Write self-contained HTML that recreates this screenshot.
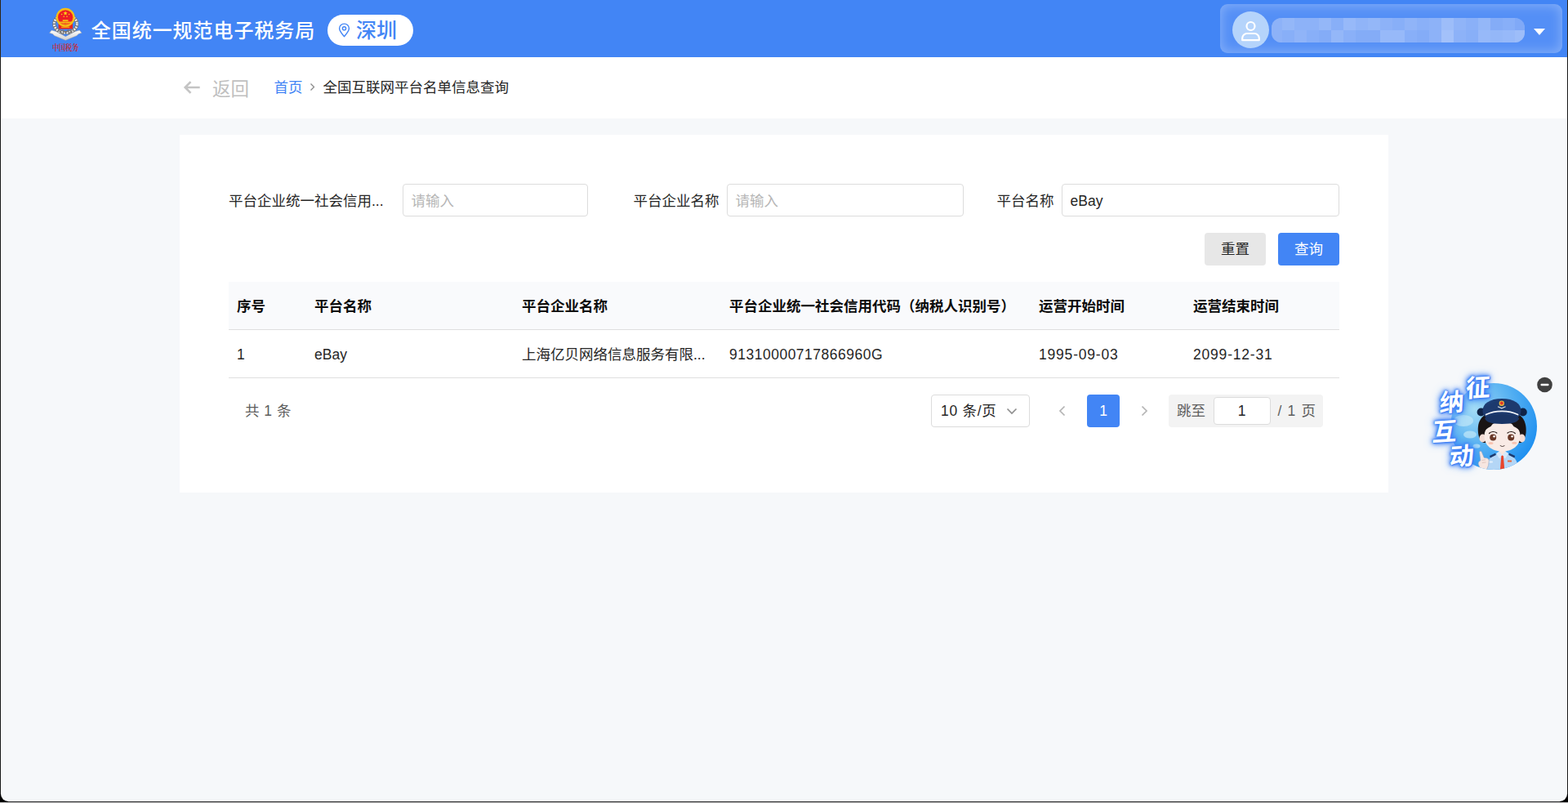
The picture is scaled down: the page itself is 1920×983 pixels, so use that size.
<!DOCTYPE html>
<html lang="zh-CN">
<head>
<meta charset="utf-8">
<title>全国互联网平台名单信息查询</title>
<style>
*{box-sizing:border-box;margin:0;padding:0}
html,body{width:1920px;height:983px;overflow:hidden;background:#000}
body{font-family:"Liberation Sans","Noto Sans CJK SC",sans-serif;font-size:17.5px;color:#222;position:relative}
.abs{position:absolute}
#win{position:absolute;left:1px;top:0;width:1918px;height:981px;background:#f6f8fa;border-radius:0 0 9px 9px;overflow:hidden}
#bottomline{position:absolute;left:0;top:982px;width:1920px;height:1px;background:#c0c0c0}
.edge{position:absolute;width:1px}
#eb{position:absolute;left:10px;top:981px;width:1900px;height:1px;background:#2d2d2d}
#page{position:absolute;left:-1px;top:0;width:1920px;height:983px}
#hdr{position:absolute;left:0;top:0;width:1920px;height:70px;background:#4285f5}
#sub{position:absolute;left:0;top:70px;width:1920px;height:75px;background:#fff}
#card{position:absolute;left:220px;top:165px;width:1480px;height:438px;background:#fff}
.t{position:absolute;white-space:nowrap;line-height:1}

#title{left:111.800px;top:25.300px;font-size:24px;line-height:26px;color:#fff;font-weight:500;letter-spacing:.95px}
#pill{position:absolute;left:401px;top:18px;width:105px;height:38px;border-radius:19px;background:#fff}
#city{left:35px;top:6px;font-size:25px;line-height:26px;color:#4285f5;font-weight:500}
#user{position:absolute;left:1494px;top:5px;width:419px;height:60px;border-radius:9px;background:#548ff6;box-shadow:inset 0 0 14px 2px rgba(255,255,255,.28)}
#avatar{position:absolute;left:15px;top:9px;width:45px;height:45px;border-radius:50%;background:#b5d4fb}
#mosaic{position:absolute;left:63px;top:17px;width:310px;height:30px;border-radius:12px;overflow:hidden;background:#7aa7f7}
#mosaic i{position:absolute;width:15px;height:15px}
#caret{position:absolute;left:384px;top:30px;width:0;height:0;border-left:7.5px solid transparent;border-right:7.5px solid transparent;border-top:8px solid #fff}
#logotxt{left:64px;top:49.500px;font-size:8.300px;line-height:10px;color:#d3211c;font-weight:600;font-family:"Noto Serif CJK SC","Liberation Serif",serif;letter-spacing:-.3px;transform:scaleY(1.3);transform-origin:0 0}

#back{left:260px;top:97.500px;font-size:22.5px;line-height:24px;color:#c0c0c0}
#bc1{left:335.500px;top:97px;font-size:17.5px;line-height:20px;color:#4285f5}
#bc2{left:395.500px;top:97px;font-size:17.5px;line-height:20px;color:#262626}
.lbl{position:absolute;top:61px;height:40px;line-height:40px;font-size:17.5px;color:#262626;white-space:nowrap}
.inp{position:absolute;top:60px;height:40px;border:1px solid #dcdcdc;border-radius:4px;background:#fff;line-height:40px;padding-left:9.500px;font-size:17.5px;color:#262626;white-space:nowrap}
.inp.ph{color:#b6b6b6}
.btn{position:absolute;top:120px;width:75px;height:40px;border-radius:4px;line-height:41px;text-align:center;font-size:17.5px}
#thead{position:absolute;left:60px;top:180px;width:1360px;height:58px;background:#f9fafc}
.line{position:absolute;left:60px;width:1360px;height:1px;background:#dfdfdf}
.th{position:absolute;top:182px;height:57px;line-height:57px;font-size:17.5px;font-weight:700;color:#0c0c0c;white-space:nowrap}
.td{position:absolute;top:240px;height:58px;line-height:58px;font-size:17.5px;color:#262626;white-space:nowrap}
.pg{position:absolute;top:318px;height:40px;line-height:41px;font-size:17.5px;white-space:nowrap}

#wd{position:absolute;left:1740px;top:450px;width:170px;height:140px}
.wt{position:absolute;font-size:30px;line-height:30px;font-weight:700;color:#fff;font-family:"Noto Sans CJK SC","Liberation Sans",sans-serif;text-shadow:0 0 2px #3b7cf5,0 0 3px #3b7cf5,0 0 4px #3b7cf5,0 0 6px #3f84f6,0 0 9px #4a8cf7,0 0 12px rgba(74,140,247,.7),1px 1px 1px #2f6fe0;transform:rotate(-4deg) skewX(-7deg);white-space:nowrap}
</style>
</head>
<body>
<div id="win"><div id="page">
<div id="hdr">
<svg class="abs" style="left:58px;top:8px" width="46" height="44" viewBox="0 0 46 44">
 <defs><linearGradient id="rb" x1="0" y1="0" x2="0" y2="1"><stop offset="0" stop-color="#fff"/><stop offset="1" stop-color="#cfcfcf"/></linearGradient></defs>
 <ellipse cx="22.300" cy="21.200" rx="14" ry="11" fill="none" stroke="#727272" stroke-width="4.200"/>
 <ellipse cx="22.300" cy="21.200" rx="14" ry="11" fill="none" stroke="#ececec" stroke-width="2.800" stroke-dasharray="2 1.300"/>
 <path d="M13.600 19h17.400v7.200c0 .8-.6 1.300-1.300 1.300H14.900c-.7 0-1.300-.5-1.300-1.300z" fill="#e8261d"/>
 <circle cx="22.100" cy="13.300" r="11.500" fill="#f6bd16"/>
 <circle cx="22.100" cy="13.300" r="9.100" fill="#ee1c25"/>
 <path d="M22.100 5.400l.75 1.750 1.900.15-1.450 1.250.45 1.850-1.650-1-1.650 1 .45-1.850-1.450-1.250 1.900-.15z" fill="#f9d616"/>
 <circle cx="17.600" cy="9.500" r=".8" fill="#f9d616"/><circle cx="26.600" cy="9.500" r=".8" fill="#f9d616"/>
 <circle cx="20.200" cy="12.200" r=".8" fill="#f9d616"/><circle cx="24" cy="12.200" r=".8" fill="#f9d616"/>
 <path d="M18.700 16.300h6.800v1.700h-6.800zM14.300 18.600h15.600c-.5 1.500-1.600 2.500-3 3H17.300c-1.400-.5-2.500-1.500-3-3z" fill="#f6bd16"/>
 <path d="M16.500 20.300c2 .9 3.500.9 5.600 0 2.100.9 3.600.9 5.600 0" fill="none" stroke="#ee1c25" stroke-width=".7"/>
 <path d="M17 24.700h10.200v1.100H17z" fill="#f6bd16"/>
 <path d="M2.600 32.300l2.600-3.300 5.300 1.500 11.800 6.200 11.800-6.200 5.300-1.500 2.600 3.300-3.800 1.200-2.300 2.200-13.600 5.600-13.600-5.600-2.300-2.200z" fill="url(#rb)" stroke="#a5a5a5" stroke-width=".5"/>
 <path d="M19.600 34.700l2.700-1.500 2.700 1.500-2.700 1.600z" fill="#4285f5"/>
 <path d="M14 29.500l4 3.300M30.600 29.500l-4 3.300M18.500 28.500l3.800 3.700 3.800-3.700" fill="none" stroke="#777" stroke-width="1.200"/>
</svg>
<div class="t" id="logotxt">中国税务</div>
<div class="t" id="title">全国统一规范电子税务局</div>
<div id="pill">
 <svg class="abs" style="left:13px;top:10px" width="15" height="18" viewBox="0 0 15 18"><path d="M7.500 1.100c3.300 0 5.900 2.500 5.900 5.700 0 3.400-3.300 6.900-5.900 9.800C4.900 13.700 1.600 10.200 1.600 6.800 1.600 3.600 4.200 1.100 7.500 1.100z" fill="none" stroke="#4285f5" stroke-width="1.400"/><circle cx="7.500" cy="6.800" r="2.100" fill="none" stroke="#4285f5" stroke-width="1.400"/></svg>
 <div class="t" id="city">深圳</div>
</div>
<div id="user">
 <div id="avatar"><svg class="abs" style="left:10px;top:10px" width="25" height="27" viewBox="0 0 25 27"><circle cx="12.500" cy="8" r="5" fill="none" stroke="#fff" stroke-width="2.200"/><path d="M2.200 25.200v-2.400c0-3.200 2.600-5.800 5.800-5.800h9c3.200 0 5.800 2.600 5.800 5.800v2.400z" fill="none" stroke="#fff" stroke-width="2.200" stroke-linejoin="round"/></svg></div>
 <div id="mosaic"><i style="left:-2px;top:0px;background:#8db2f8"></i><i style="left:13px;top:0px;background:#94b7f8"></i><i style="left:28px;top:0px;background:#8db2f8"></i><i style="left:43px;top:0px;background:#8db2f8"></i><i style="left:58px;top:0px;background:#94b7f8"></i><i style="left:73px;top:0px;background:#88aff8"></i><i style="left:88px;top:0px;background:#97b9f9"></i><i style="left:103px;top:0px;background:#90b4f8"></i><i style="left:118px;top:0px;background:#94b7f8"></i><i style="left:133px;top:0px;background:#8db2f8"></i><i style="left:148px;top:0px;background:#88aff8"></i><i style="left:163px;top:0px;background:#90b4f8"></i><i style="left:178px;top:0px;background:#8ab0f8"></i><i style="left:193px;top:0px;background:#8db2f8"></i><i style="left:208px;top:0px;background:#9dbdf9"></i><i style="left:223px;top:0px;background:#90b4f8"></i><i style="left:238px;top:0px;background:#8ab0f8"></i><i style="left:253px;top:0px;background:#94b7f8"></i><i style="left:268px;top:0px;background:#84acf7"></i><i style="left:283px;top:0px;background:#88aff8"></i><i style="left:298px;top:0px;background:#80a9f7"></i><i style="left:-2px;top:15px;background:#8db2f8"></i><i style="left:13px;top:15px;background:#88aff8"></i><i style="left:28px;top:15px;background:#90b4f8"></i><i style="left:43px;top:15px;background:#88aff8"></i><i style="left:58px;top:15px;background:#84acf7"></i><i style="left:73px;top:15px;background:#94b7f8"></i><i style="left:88px;top:15px;background:#8ab0f8"></i><i style="left:103px;top:15px;background:#84acf7"></i><i style="left:118px;top:15px;background:#84acf7"></i><i style="left:133px;top:15px;background:#97b9f9"></i><i style="left:148px;top:15px;background:#97b9f9"></i><i style="left:163px;top:15px;background:#88aff8"></i><i style="left:178px;top:15px;background:#84acf7"></i><i style="left:193px;top:15px;background:#8db2f8"></i><i style="left:208px;top:15px;background:#a3c1fa"></i><i style="left:223px;top:15px;background:#8db2f8"></i><i style="left:238px;top:15px;background:#88aff8"></i><i style="left:253px;top:15px;background:#97b9f9"></i><i style="left:268px;top:15px;background:#94b7f8"></i><i style="left:283px;top:15px;background:#97b9f9"></i><i style="left:298px;top:15px;background:#9dbdf9"></i></div>
 <div id="caret"></div>
</div>
</div>
<div id="sub">
<svg class="abs" style="left:224px;top:28px" width="22" height="18" viewBox="0 0 22 18"><path d="M9.500 2.200L2.700 9l6.800 6.800M2.700 9h18" fill="none" stroke="#c4c4c4" stroke-width="2.600"/></svg>
</div>
<div class="t" id="back">返回</div>
<div class="t" id="bc1">首页</div>
<svg class="abs" style="left:378px;top:100px" width="9" height="13" viewBox="0 0 9 13"><path d="M2.500 2.500l4 4-4 4" fill="none" stroke="#8a8a8a" stroke-width="1.300"/></svg>
<div class="t" id="bc2">全国互联网平台名单信息查询</div>
<div id="card">
<div class="lbl" style="left:60px">平台企业统一社会信用...</div>
<div class="inp ph" style="left:273px;width:227px">请输入</div>
<div class="lbl" style="left:555.500px">平台企业名称</div>
<div class="inp ph" style="left:670px;width:290px">请输入</div>
<div class="lbl" style="left:1000.500px">平台名称</div>
<div class="inp" style="left:1080px;width:340px">eBay</div>
<div class="btn" style="left:1255px;background:#e7e7e7;color:#262626">重置</div>
<div class="btn" style="left:1345px;background:#4285f5;color:#fff">查询</div>
<div id="thead"></div>
<div class="line" style="top:238px"></div>
<div class="line" style="top:297px"></div>
<div class="th" style="left:70px">序号</div>
<div class="th" style="left:165px">平台名称</div>
<div class="th" style="left:419px">平台企业名称</div>
<div class="th" style="left:673px">平台企业统一社会信用代码（纳税人识别号）</div>
<div class="th" style="left:1052px">运营开始时间</div>
<div class="th" style="left:1241px">运营结束时间</div>
<div class="td" style="left:70px">1</div>
<div class="td" style="left:165px">eBay</div>
<div class="td" style="left:419px">上海亿贝网络信息服务有限...</div>
<div class="td" style="left:673px;letter-spacing:.5px">91310000717866960G</div>
<div class="td" style="left:1052px;letter-spacing:.8px">1995-09-03</div>
<div class="td" style="left:1241px;letter-spacing:.8px">2099-12-31</div>
<div class="pg" style="left:80px;color:#5e5e5e;word-spacing:1px">共 1 条</div>
<div class="pg" style="left:920px;width:121px;border:1px solid #dcdcdc;border-radius:4px;line-height:39px;padding-left:11px;color:#262626;letter-spacing:.7px">10 条/页
 <svg class="abs" style="left:91px;top:14px" width="14" height="10" viewBox="0 0 14 10"><path d="M1.500 2.500L7 8l5.500-5.500" fill="none" stroke="#8f8f8f" stroke-width="1.700"/></svg></div>
<svg class="abs" style="left:1076px;top:331px" width="10" height="14" viewBox="0 0 10 14"><path d="M7.500 1.500L2 7l5.500 5.500" fill="none" stroke="#b4b4b4" stroke-width="1.700"/></svg>
<div class="pg" style="left:1111px;width:40px;border-radius:4px;background:#4285f5;color:#fff;text-align:center">1</div>
<svg class="abs" style="left:1176px;top:331px" width="10" height="14" viewBox="0 0 10 14"><path d="M2.500 1.500L8 7l-5.500 5.500" fill="none" stroke="#b4b4b4" stroke-width="1.700"/></svg>
<div class="pg" style="left:1211px;width:189px;border-radius:4px;background:#f3f3f3;color:#5e5e5e">
 <span class="abs" style="left:10px;top:0">跳至</span>
 <span class="abs" style="left:54.500px;top:3px;width:70px;height:34px;line-height:33px;border:1px solid #dcdcdc;border-radius:4px;background:#fff;text-align:center;color:#262626">1</span>
 <span class="abs" style="left:133.500px;top:0;word-spacing:1.500px;letter-spacing:.4px">/ 1 页</span>
</div>
</div>
<div id="wd">
<svg class="abs" style="left:0;top:0" width="170" height="140" viewBox="0 0 170 140">
 <defs>
  <radialGradient id="gc" cx="28%" cy="30%" r="85%"><stop offset="0" stop-color="#a4dcf6"/><stop offset=".45" stop-color="#5fb6f2"/><stop offset="1" stop-color="#168bf0"/></radialGradient>
  <clipPath id="cc"><circle cx="89" cy="72" r="53"/></clipPath>
 </defs>
 <circle cx="89" cy="72" r="53" fill="url(#gc)"/>
 <g clip-path="url(#cc)">
  <ellipse cx="52" cy="65" rx="12" ry="7" fill="#b9e3f7" opacity=".8"/>
  <ellipse cx="60" cy="82" rx="8" ry="4.500" fill="#b9e3f7" opacity=".8"/>
  <ellipse cx="68" cy="96" rx="4.500" ry="2.600" fill="#b9e3f7" opacity=".8"/>
  <!-- body -->
  <path d="M80 127c0-10 3-17 10-20l9.600-3 9.600 3c7 3 10 10 10 20z" fill="#b4d6f6"/>
  <path d="M95.500 103.500l4.100 4.500 4.100-4.500-.8-3h-6.600z" fill="#f7e6e0"/>
  <path d="M92 105l4-2.500 3.600 5-3.600 4zM107.200 105l-4-2.500-3.600 5 3.600 4z" fill="#d6e9fb"/>
  <path d="M98.300 108.500l1.300-1.300 1.300 1.300 1.500 18h-5.600z" fill="#e8452c"/>
  <rect x="106" y="113.500" width="5" height="2" fill="#e8673c"/>
  <rect x="83" y="114.500" width="5" height="2" rx="1" fill="#e4f0fc"/>
  <path d="M84 108l7-3.200.9 2.300-7 3.500zM115.200 108l-7-3.200-.9 2.300 7 3.500z" fill="#1d3a6e"/>
  <!-- hand -->
  <path d="M71.500 103.200c.3-1.200 2.100-1.400 2.700-.2l3 7.200 3.400.6c1.800.4 2.800 1.800 2.600 3.600l-.6 5.200-2.600 6.400h-6.400l-3.100-7c-.7-1.700-.3-3.300 1-4.300l1.300-1z" fill="#f7e6e0" stroke="#8fa5c4" stroke-width=".6"/>
  <path d="M74.500 113.500l4.500-.7M74.800 116.500l4.700-.6" fill="none" stroke="#c9a89c" stroke-width=".5"/>
  <!-- hair -->
  <path d="M70 80c-2-18 8-27 29.400-27S130 62 128.500 80c-1 7-3 10-6 12H76c-3-2-5-5-6-12z" fill="#1a1414"/>
  <circle cx="73.600" cy="54.500" r="5" fill="#102448"/>
  <circle cx="124.800" cy="54.500" r="5" fill="#102448"/>
  <!-- ears -->
  <ellipse cx="75.500" cy="86.500" rx="4" ry="5" fill="#f3dcd5"/>
  <ellipse cx="123.600" cy="86.500" rx="4" ry="5" fill="#f3dcd5"/>
  <!-- face -->
  <path d="M77.500 84c0-11 8-17 22-17s22 6 22 17c0 11-9 18.500-22 18.500S77.500 95 77.500 84z" fill="#f9ebe6"/>
  <path d="M76.500 80c2-9 8-14 15-16l-6 8c-4 2-7 4-9 8zM122.500 80c-2-8-7-12-14-15l5 7c4 2 7 4 9 8z" fill="#1a1414"/>
  <!-- eyes -->
  <path d="M83.500 80.500c2-2.300 6.500-2.800 9.300-.5M106 80c2.800-2.300 7.300-1.800 9.300.5" fill="none" stroke="#2a1c18" stroke-width="1.200" stroke-linecap="round"/>
  <circle cx="88.200" cy="85.600" r="4" fill="#6a3827"/>
  <circle cx="110.200" cy="85.600" r="4" fill="#6a3827"/>
  <circle cx="89.600" cy="84.200" r="1.300" fill="#fff"/>
  <circle cx="111.600" cy="84.200" r="1.300" fill="#fff"/>
  <ellipse cx="85.500" cy="92.600" rx="3" ry="1.500" fill="#f8c3b2"/>
  <ellipse cx="114.300" cy="92.300" rx="3" ry="1.500" fill="#f8c3b2"/>
  <path d="M97 95.300c1.300 1.700 4 1.700 5.300 0" fill="none" stroke="#3a2a26" stroke-width=".9" stroke-linecap="round"/>
  <!-- cap -->
  <path d="M76 56c-2.500-10 6-18 23-18s25.500 8 23 18c-1 3-3 5-5 6H81c-2-1-4-3-5-6z" fill="#1d3a6e"/>
  <path d="M78 62c6-3.500 13-5 21.200-5s15.200 1.500 21.200 5c-1.500 4-6 7-21.200 7S79.500 66 78 62z" fill="#1a3566"/>
  <path d="M79.600 57.600c6-3 12.500-4.200 19.500-4.200s13.500 1.200 19.500 4.200" fill="none" stroke="#f4f7fb" stroke-width="1.700" stroke-linecap="round"/>
  <circle cx="98.800" cy="43.800" r="3.200" fill="#e7b63b"/>
  <circle cx="98.800" cy="43.400" r="2" fill="#e2352a"/>
  <path d="M94 47.800l4.800 2 4.800-2" fill="none" stroke="#d9dee6" stroke-width="1.100"/>
 </g>
 <circle cx="151.500" cy="21" r="9.300" fill="#404040"/>
 <rect x="146.500" y="19.700" width="10" height="2.600" rx="1" fill="#fff"/>
</svg>
<div class="wt" style="left:55px;top:6.500px">征</div>
<div class="wt" style="left:22.500px;top:24.500px">纳</div>
<div class="wt" style="left:14px;top:60.500px">互</div>
<div class="wt" style="left:34.500px;top:91px">动</div>
</div>
</div></div>
<div class="edge" style="left:0;top:0;height:70px;background:#2e2618"></div><div class="edge" style="left:0;top:70px;height:902px;background:#191919"></div><div class="edge" style="left:1919px;top:0;height:70px;background:#2e2618"></div><div class="edge" style="left:1919px;top:70px;height:902px;background:#191919"></div><div id="eb"></div>
<div id="bottomline"></div>
</body>
</html>
